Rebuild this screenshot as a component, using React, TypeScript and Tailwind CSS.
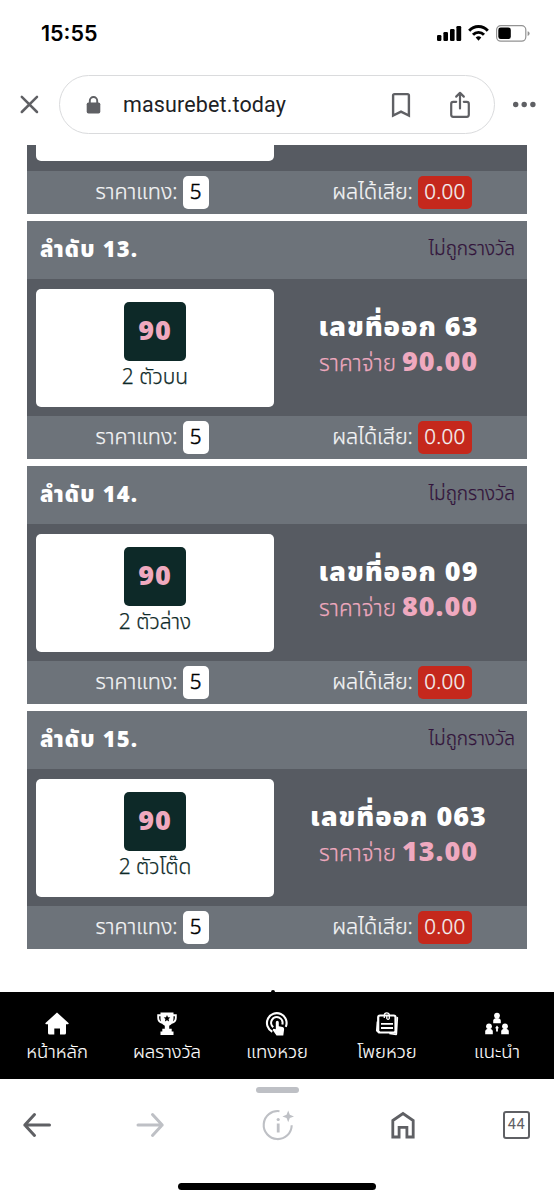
import React from "react";

type Bet = {
  order: number;
  kind: string;
  result: string;
  payout: string;
};

const bets: Bet[] = [
  { order: 13, kind: "2 ตัวบน", result: "63", payout: "90.00" },
  { order: 14, kind: "2 ตัวล่าง", result: "09", payout: "80.00" },
  { order: 15, kind: "2 ตัวโต๊ด", result: "063", payout: "13.00" },
];

function StatusBar() {
  return (
    <header className="flex h-[66px] items-center justify-between pl-[41px] pr-[23px]">
      <span className="mt-[2px] font-['Inter',sans-serif] text-[21.5px] font-semibold leading-none text-black">15:55</span>
      <div className="flex items-center">
        <svg width="94" height="18" viewBox="0 0 94 18">
          <rect x="0" y="11" width="4.4" height="6" rx="1.2" />
          <rect x="6.4" y="8" width="4.6" height="9" rx="1.2" />
          <rect x="13" y="5" width="4.6" height="12" rx="1.2" />
          <rect x="19.4" y="2" width="4.8" height="15" rx="1.2" />
          <g fill="none" stroke="#000" strokeWidth="2.9">
            <path d="M32.2 6.7a12.4 12.4 0 0 1 18.6 0" />
            <path d="M36 10.7a7.6 7.6 0 0 1 11 0" />
          </g>
          <path d="M38.7 13.5a4 4 0 0 1 5.6 0L41.5 16.8z" />
          <rect x="59.6" y="1.6" width="29.2" height="15.6" rx="4.2" fill="none" stroke="#929292" strokeWidth="1.2" />
          <rect x="61.3" y="3.5" width="12.5" height="11.6" rx="2.4" />
          <path d="M90.6 7.2q2 .5 2 2.4t-2 2.3z" fill="#929292" />
        </svg>
      </div>
    </header>
  );
}

function AddressBar() {
  return (
    <div className="flex h-[79px] items-start pt-[9px] text-[#5f6064]">
      <svg className="ml-[20px] mt-[20px]" width="19" height="19" viewBox="0 0 19 19" fill="none" stroke="currentColor" strokeWidth="2.5" strokeLinecap="round">
        <path d="M1.8 1.8 17 17M17 1.8 1.8 17" />
      </svg>
      <div className="ml-[20px] flex h-[59px] w-[436px] items-center rounded-full border border-[#dadbdd] pl-[26px]">
        <svg className="mt-[2px]" width="15" height="18" viewBox="0 0 15 18">
          <rect x="0.7" y="6.5" width="13.6" height="11" rx="1.8" fill="currentColor" />
          <path d="M3.8 7V4.7a3.7 3.7 0 0 1 7.4 0V7" fill="none" stroke="currentColor" strokeWidth="1.9" />
        </svg>
        <span className="ml-[22px] mt-[2px] w-[208px] whitespace-nowrap font-['Roboto',sans-serif] text-[21.5px] tracking-[0.13px] text-[#202124]">
          masurebet.today
        </span>
        <svg className="ml-[60px] mt-[1px]" width="20" height="26" viewBox="0 0 20 26" fill="none" stroke="currentColor" strokeWidth="2.4">
          <path d="M2.1 3.5q0-1.4 1.4-1.4h13q1.4 0 1.4 1.4v20l-7.9-3.8-7.9 3.8z" />
        </svg>
        <svg className="ml-[38px] mt-[2px]" width="22" height="28" viewBox="0 0 22 28" fill="none" stroke="currentColor" strokeWidth="2.2" strokeLinecap="round" strokeLinejoin="round">
          <path d="M7.2 10.8H4.2q-2 0-2 2v11q0 2 2 2h13.6q2 0 2-2v-11q0-2-2-2h-3M11 17.5V1.8M7.2 5.6 11 1.8l3.8 3.8" />
        </svg>
      </div>
      <svg className="ml-[17px] mt-[26px]" width="25" height="7" viewBox="0 0 25 7" fill="currentColor">
        <circle cx="3.7" cy="3.5" r="2.7" />
        <circle cx="12.2" cy="3.5" r="2.7" />
        <circle cx="20.9" cy="3.5" r="2.7" />
      </svg>
    </div>
  );
}

function CardFooter() {
  return (
    <div className="grid h-[43px] grid-cols-2 bg-[#6d737a] leading-[34px] text-[#f4f5f6]">
      <div className="flex items-start justify-center pt-[5px]">
        <span className="whitespace-nowrap text-[21.5px] font-light [-webkit-text-stroke:0.25px]">ราคาแทง:</span>
        <span className="ml-[5px] h-[33px] w-[26px] rounded-[5px] bg-white text-center text-[20.5px] font-light text-black [-webkit-text-stroke:0.5px]">5</span>
      </div>
      <div className="flex items-start justify-center pt-[5px]">
        <span className="whitespace-nowrap text-[21.5px] font-light [-webkit-text-stroke:0.25px]">ผลได้เสีย:</span>
        <span className="ml-[5px] h-[33px] w-[54px] rounded-[5px] bg-[#c5281c] text-center text-[20.5px] font-light tracking-[0.3px] [-webkit-text-stroke:0.25px]">0.00</span>
      </div>
    </div>
  );
}

function BetCard({ bet }: { bet: Bet }) {
  return (
    <article className="h-[238px]">
      <div className="flex h-[58px] items-center justify-between bg-[#6d737a] pl-[13px] pr-[12px]">
        <h2 className="mt-[2px] whitespace-nowrap text-[22px] font-black tracking-[1.2px] text-white">ลำดับ {bet.order}.</h2>
        <span className="whitespace-nowrap text-[19px] font-light text-[#32143b] [-webkit-text-stroke:0.25px]">ไม่ถูกรางวัล</span>
      </div>
      <div className="flex h-[137px] bg-[#575b62] px-[9px] pt-[10px]">
        <div className="flex h-[118px] w-[238px] flex-col items-center rounded-[5px] bg-white pt-[13px]">
          <div className="flex h-[59px] w-[62px] shrink-0 items-center justify-center rounded-[5px] bg-[#0d2928] pt-[2px] text-[27px] font-black tracking-[1px] text-[#efa9bf]">
            90
          </div>
          <span className="whitespace-nowrap text-[21px] font-light leading-[33px] text-[#0d2928] [-webkit-text-stroke:0.25px]">{bet.kind}</span>
        </div>
        <div className="flex flex-1 flex-col items-center pl-[5px] pt-[20px]">
          <div className="whitespace-nowrap text-[27px] font-black leading-[38px] tracking-[1px] text-white">เลขที่ออก {bet.result}</div>
          <div className="flex items-baseline whitespace-nowrap leading-[32px] text-[#efa9bf]">
            <span className="text-[22.5px] font-light [-webkit-text-stroke:0.25px]">ราคาจ่าย</span>
            <span className="ml-[6px] text-[27px] font-black tracking-[1px]">{bet.payout}</span>
          </div>
        </div>
      </div>
      <CardFooter />
    </article>
  );
}

function HomeIcon() {
  return (
    <svg width="24" height="24" viewBox="0 0 24 24" fill="white">
      <path d="M12 .5 23.5 11q.6 1-.6 1.2H21V21q0 1.5-1.500 1.500H15v-6H9.300v6H4.600Q3 22.500 3 21v-8.800H1.200Q0 12 .5 11z" />
    </svg>
  );
}

function TrophyIcon() {
  return (
    <svg width="24" height="24" viewBox="0 0 24 24">
      <path d="M6 3.200H3.200v2.500q0 4.300 4.200 5.100M18 3.200h2.800v2.500q0 4.300-4.200 5.100" fill="none" stroke="white" strokeWidth="1.900" />
      <path d="M5.500.500h13v6q0 5.500-4.300 7.200v3.100h2.500v2.700h1.800V23H5.500v-3.500h1.800v-2.700h2.500v-3.100Q5.500 12 5.500 6.500z" fill="white" />
      <path d="m12 3 1 2.200 2.300.2-1.700 1.700.5 2.500-2.100-1.300-2.100 1.300.5-2.500-1.700-1.700 2.300-.2z" fill="black" />
    </svg>
  );
}

function TapIcon() {
  return (
    <svg width="24" height="24" viewBox="0 0 24 24">
      <path d="M7.300 19.700A9.800 9.800 0 1 1 20.800 14.800" fill="none" stroke="white" strokeWidth="2.100" />
      <path d="M8.200 15.200A5.700 5.700 0 1 1 17.300 12.500" fill="none" stroke="white" strokeWidth="2.100" />
      <path d="M10.800 10.500q0-1.700 1.500-1.700t1.500 1.700v3.700l3.700.9q1.900.5 1.600 2.400l-.8 6H11.500l-3.500-5q-.7-1.600.8-1.800l2 .6z" fill="white" />
    </svg>
  );
}

function NotesIcon() {
  return (
    <svg width="24" height="24" viewBox="0 0 24 24" fill="none" stroke="white" strokeLinejoin="round">
      <path d="M2.500 9.500 1.800 18.800l3 1.500M21.500 5.500l.8.3L21.300 22.300l-7-.8" strokeWidth="1.700" />
      <rect x="3.200" y="3.500" width="17.300" height="17" rx="1.800" strokeWidth="2.200" />
      <path d="M6 11.900h12M6 16h12" strokeWidth="1.900" />
      <path d="M9.300 6V3.300a2.500 2.500 0 0 1 5 0V6.500q-1.200 1.900-2.500 0V3.700" strokeWidth="1.300" />
    </svg>
  );
}

function PeopleIcon() {
  return (
    <svg width="24" height="24" viewBox="0 0 24 24" fill="white">
      <circle cx="12" cy="3.600" r="2.900" />
      <path d="M8.200 11.200V8.700Q8.500 6 12 6t3.800 2.700v2.500z" />
      <circle cx="4" cy="14.300" r="2.900" />
      <path d="M.200 22.200v-2.700Q.300 16.800 4 16.800t3.800 2.700v2.700z" />
      <circle cx="20" cy="14.300" r="2.900" />
      <path d="M16.200 22.200v-2.700q0-2.700 3.800-2.700t3.800 2.700v2.700z" />
      <path d="m12 13.500 2 2.800h-1.100v3.200h-1.800v-3.200H10z" />
    </svg>
  );
}

const tabs: { label: string; icon: () => React.JSX.Element }[] = [
  { label: "หน้าหลัก", icon: HomeIcon },
  { label: "ผลรางวัล", icon: TrophyIcon },
  { label: "แทงหวย", icon: TapIcon },
  { label: "โพยหวย", icon: NotesIcon },
  { label: "แนะนำ", icon: PeopleIcon },
];

function SiteNav() {
  return (
    <nav className="relative flex h-[87px] justify-center bg-black pt-[20px]">
      <span className="absolute -top-[2px] left-[271px] h-[4px] w-[4px] rounded-full bg-black" />
      {tabs.map(({ label, icon: Icon }) => (
        <div key={label} className="flex w-[110px] shrink-0 flex-col items-center">
          <Icon />
          <span className="whitespace-nowrap text-[18.5px] font-light leading-[33px] text-white [-webkit-text-stroke:0.15px]">{label}</span>
        </div>
      ))}
    </nav>
  );
}

function BrowserToolbar() {
  return (
    <footer className="flex h-[121px] flex-col items-center text-[#5f6064]">
      <div className="mt-[8px] h-[6px] w-[43px] shrink-0 rounded-full bg-[#bec0c5]" />
      <div className="mt-[11px] flex h-[42px] w-full items-center pl-[22px]">
        <svg width="30" height="26" viewBox="0 0 30 26" fill="none" stroke="currentColor" strokeWidth="3" strokeLinecap="round" strokeLinejoin="round">
          <path d="M12.5 2.5 2.8 13l9.7 10.5M2.8 13h24.7" />
        </svg>
        <svg className="ml-[84px]" width="30" height="26" viewBox="0 0 30 26" fill="none" stroke="#bec0c5" strokeWidth="3" strokeLinecap="round" strokeLinejoin="round">
          <path d="m16.5 2.5 9.7 10.5-9.7 10.5M26.2 13H2" />
        </svg>
        <svg className="ml-[95px]" width="34" height="34" viewBox="0 0 34 34" fill="none" stroke="#bec0c5" strokeWidth="2.1">
          <path d="M18.5 3.2a14 14 0 1 0 12.2 14" />
          <path d="M17.2 15.5v9" strokeWidth="2.8" />
          <circle cx="17.2" cy="11.5" r="1.6" fill="#bec0c5" stroke="none" />
          <path d="m27.2 2.5 1.6 4.3 4.2 1.6-4.2 1.6-1.6 4.3-1.6-4.3-4.2-1.6 4.2-1.6z" fill="#bec0c5" stroke="none" />
        </svg>
        <svg className="ml-[95px]" width="26" height="30" viewBox="0 0 26 30" fill="none" stroke="currentColor" strokeWidth="2.8">
          <path d="M2.800 10.500 13 3.500l10.200 7v16.500h-6.300v-9.700H9.100v9.700H2.800z" />
        </svg>
        <div className="ml-[87px] flex h-[28px] w-[27px] items-center justify-center rounded-[3px] border-2 border-[#5f6064] font-['Roboto',sans-serif] text-[14.5px] tracking-[0.5px]">
          44
        </div>
      </div>
      <div className="mt-[37px] h-[7px] w-[198px] shrink-0 rounded-full bg-black" />
    </footer>
  );
}

export default function App() {
  return (
    <div className="flex h-[1200px] w-[554px] flex-col overflow-hidden bg-white font-['Noto_Sans_Thai','Noto_Sans',sans-serif]">
      <StatusBar />
      <AddressBar />
      <main className="flex h-[848px] flex-col gap-[7px] px-[27px]">
        <section>
          <div className="h-[26px] bg-[#575b62] pl-[9px]">
            <div className="h-[16px] w-[238px] rounded-b-[5px] bg-white" />
          </div>
          <CardFooter />
        </section>
        {bets.map((bet) => (
          <BetCard key={bet.order} bet={bet} />
        ))}
      </main>
      <SiteNav />
      <BrowserToolbar />
    </div>
  );
}
